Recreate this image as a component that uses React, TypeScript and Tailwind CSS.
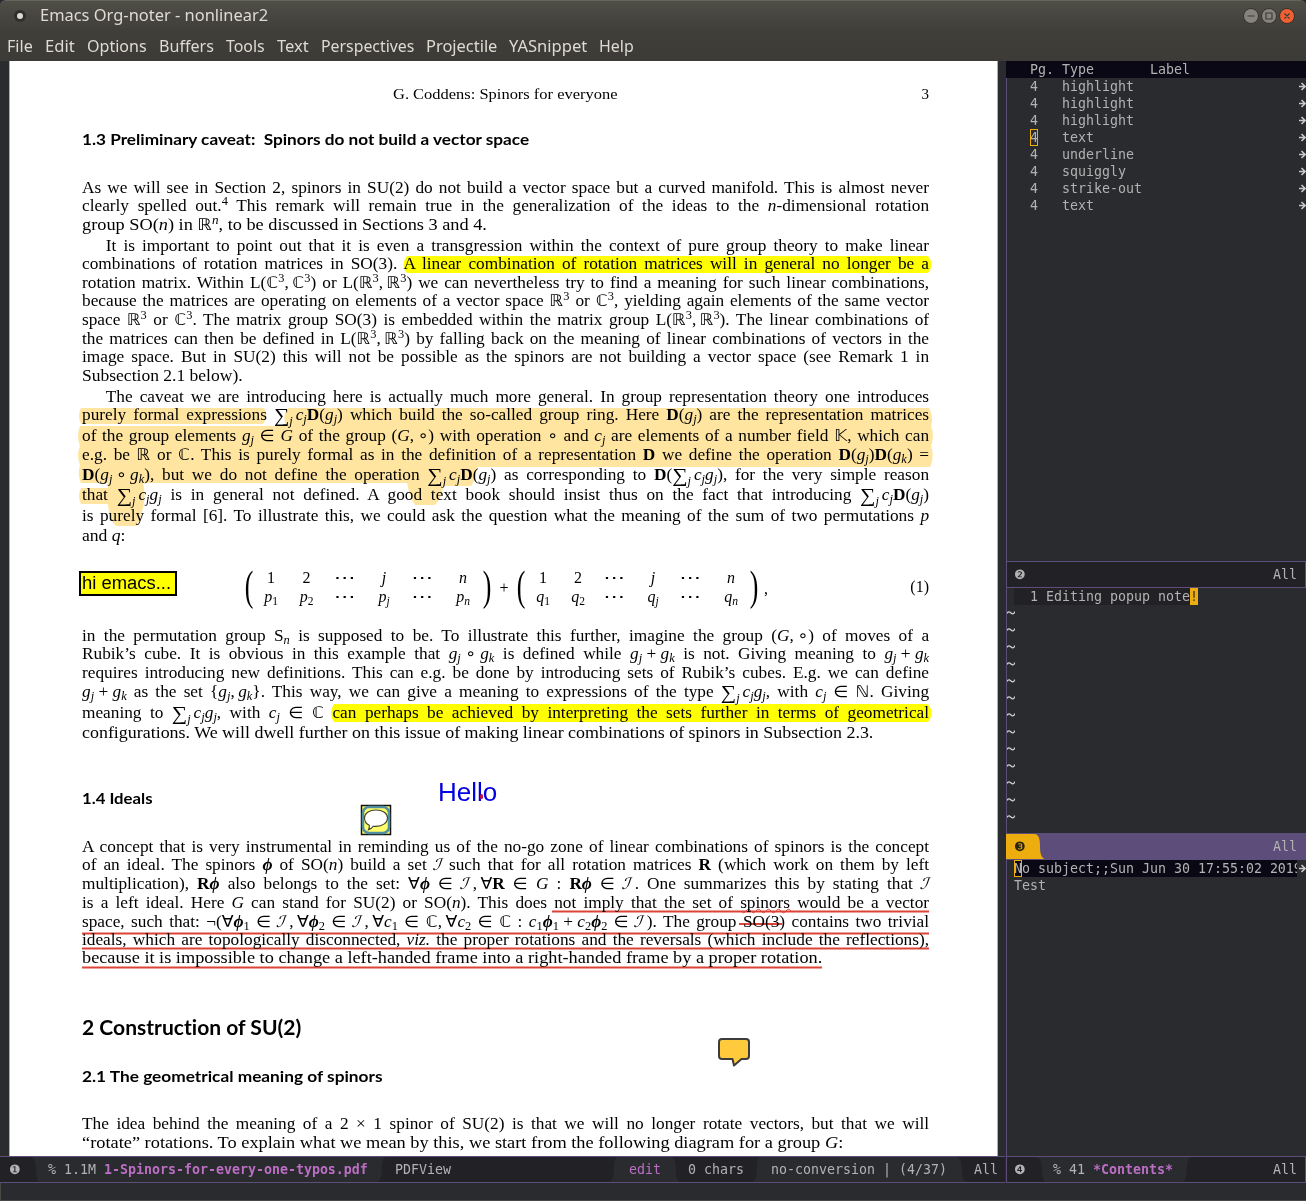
import { useLayoutEffect, useRef, useState } from "react";
import type { ReactNode } from "react";

/* Stretches a run of text horizontally so that it fills its box. */
function Fit({ className, children }: { className: string; children: ReactNode }) {
  const outer = useRef<HTMLSpanElement>(null);
  const inner = useRef<HTMLSpanElement>(null);
  const [scale, setScale] = useState(1);
  useLayoutEffect(() => {
    if (outer.current && inner.current && inner.current.offsetWidth > 0) {
      setScale(outer.current.clientWidth / inner.current.offsetWidth);
    }
  }, []);
  return (
    <span ref={outer} className={`block whitespace-nowrap ${className}`}>
      <span ref={inner} className="inline-block origin-left" style={{ transform: `scaleX(${scale})` }}>
        {children}
      </span>
    </span>
  );
}

/* Inline markup: {i:x} italic, {_:j} italic subscript, {,:1} subscript, {^:3} superscript,
   {m:n} italic superscript, {b:D} bold, {p:φ} bold italic, {d:ℝ} blackboard, {c:ℐ} script, {s:j} sum. */
function rich(source: string): ReactNode[] {
  const text = source
    .replace(/ \+ /g, "\u2005+\u2005")
    .replace(/\} ∘ \{/g, "}\u2005∘\u2005{");
  const out: ReactNode[] = [];
  const re = /\{([i_,^mbpdcs]):([^{}]*)\}/g;
  let last = 0;
  let m: RegExpExecArray | null;
  while ((m = re.exec(text))) {
    if (m.index > last) out.push(text.slice(last, m.index));
    const k = m.index;
    const t = m[2];
    if (m[1] === "i") out.push(<i key={k}>{t}</i>);
    if (m[1] === "_") out.push(<sub key={k} className="text-[11.5px] italic">{t}</sub>);
    if (m[1] === ",") out.push(<sub key={k} className="text-[11.5px]">{t}</sub>);
    if (m[1] === "^") out.push(<sup key={k} className="text-[11.5px]">{t}</sup>);
    if (m[1] === "m") out.push(<sup key={k} className="text-[11.5px] italic">{t}</sup>);
    if (m[1] === "b") out.push(<b key={k}>{t}</b>);
    if (m[1] === "p") out.push(<b key={k} className="italic">{t}</b>);
    if (m[1] === "d") out.push(<span key={k} className="font-['DejaVu_Sans'] text-[16px] leading-[0]">{t}</span>);
    if (m[1] === "c") out.push(<span key={k} className="inline-block h-0 -skew-x-[18deg] font-['DejaVu_Sans'] text-[16px] leading-[0]">{t}</span>);
    if (m[1] === "s")
      out.push(
        <span key={k}>
          <span className="relative top-[2px] text-[20px] leading-[0]">∑</span>
          <sub className="-bottom-[5px] text-[11.5px] italic">{t}</sub>{"\u2006"}
        </span>,
      );
    last = m.index + m[0].length;
  }
  out.push(text.slice(last));
  return out;
}

const heights: Record<number, string> = { 18: "h-[18px]", 19: "h-[19px]", 20: "h-[20px]", 21: "h-[21px]" };

type Row = [height: number, text: string, fit?: string, indent?: boolean];

function Lines({ rows }: { rows: Row[] }) {
  return (
    <div className="text-[16px] leading-[18px]">
      {rows.map(([h, text, fit, indent], n) => (
        <div key={n} className={heights[h]}>
          {fit ? (
            <Fit className={fit}>{rich(text)}</Fit>
          ) : (
            <div
              className={`w-[784.3px] origin-left scale-x-[1.08] whitespace-nowrap [text-align-last:justify] ${indent ? "indent-[22px]" : ""}`}
            >
              {rich(text)}
            </div>
          )}
        </div>
      ))}
    </div>
  );
}

const body1: Row[] = [
  [18, "As we will see in Section 2, spinors in SU(2) do not build a vector space but a curved manifold. This is almost never"],
  [19, "clearly spelled out.{^:4} This remark will remain true in the generalization of the ideas to the {i:n}-dimensional rotation"],
  [21, "group SO({i:n}) in {d:ℝ}{m:n}, to be discussed in Sections 3 and 4.", "w-[405px]"],
  [18, "It is important to point out that it is even a transgression within the context of pure group theory to make linear", undefined, true],
  [19, "combinations of rotation matrices in SO(3). A linear combination of rotation matrices will in general no longer be a"],
  [18, "rotation matrix. Within L({d:ℂ}{^:3},\u2009{d:ℂ}{^:3}) or L({d:ℝ}{^:3},\u2009{d:ℝ}{^:3}) we can nevertheless try to find a meaning for such linear combinations,"],
  [19, "because the matrices are operating on elements of a vector space {d:ℝ}{^:3} or {d:ℂ}{^:3}, yielding again elements of the same vector"],
  [19, "space {d:ℝ}{^:3} or {d:ℂ}{^:3}. The matrix group SO(3) is embedded within the matrix group L({d:ℝ}{^:3},\u2009{d:ℝ}{^:3}). The linear combinations of"],
  [18, "the matrices can then be defined in L({d:ℝ}{^:3},\u2009{d:ℝ}{^:3}) by falling back on the meaning of linear combinations of vectors in the"],
  [19, "image space. But in SU(2) this will not be possible as the spinors are not building a vector space (see Remark 1 in"],
  [21, "Subsection 2.1 below).", "w-[161px]"],
  [18, "The caveat we are introducing here is actually much more general. In group representation theory one introduces", undefined, true],
  [21, "purely formal expressions {s:j}{i:c}{_:j}{b:D}({i:g}{_:j}) which build the so-called group ring. Here {b:D}({i:g}{_:j}) are the representation matrices"],
  [19, "of the group elements {i:g}{_:j} ∈ {i:G} of the group ({i:G},\u2009∘) with operation ∘ and {i:c}{_:j} are elements of a number field {d:𝕂}, which can"],
  [20, "e.g. be {d:ℝ} or {d:ℂ}. This is purely formal as in the definition of a representation {b:D} we define the operation {b:D}({i:g}{_:j}){b:D}({i:g}{_:k}) ="],
  [20, "{b:D}({i:g}{_:j}\u2009∘\u2009{i:g}{_:k}), but we do not define the operation {s:j}{i:c}{_:j}{b:D}({i:g}{_:j}) as corresponding to {b:D}({s:j}{i:c}{_:j}{i:g}{_:j}), for the very simple reason"],
  [21, "that {s:j}{i:c}{_:j}{i:g}{_:j} is in general not defined. A good text book should insist thus on the fact that introducing {s:j}{i:c}{_:j}{b:D}({i:g}{_:j})"],
  [20, "is purely formal [6]. To illustrate this, we could ask the question what the meaning of the sum of two permutations {i:p}"],
  [19, "and {i:q}:", "w-[44px]"],
];

const body2: Row[] = [
  [18, "in the permutation group S{_:n} is supposed to be. To illustrate this further, imagine the group ({i:G},\u2009∘) of moves of a"],
  [19, "Rubik’s cube. It is obvious in this example that {i:g}{_:j} ∘ {i:g}{_:k} is defined while {i:g}{_:j} + {i:g}{_:k} is not. Giving meaning to {i:g}{_:j} + {i:g}{_:k}"],
  [19, "requires introducing new definitions. This can e.g. be done by introducing sets of Rubik’s cubes. E.g. we can define"],
  [21, "{i:g}{_:j} + {i:g}{_:k} as the set {{i:g}{_:j},\u2009{i:g}{_:k}}. This way, we can give a meaning to expressions of the type {s:j}{i:c}{_:j}{i:g}{_:j}, with {i:c}{_:j} ∈ {d:ℕ}. Giving"],
  [20, "meaning to {s:j}{i:c}{_:j}{i:g}{_:j}, with {i:c}{_:j} ∈ {d:ℂ} can perhaps be achieved by interpreting the sets further in terms of geometrical"],
  [19, "configurations. We will dwell further on this issue of making linear combinations of spinors in Subsection 2.3.", "w-[791px]"],
];

const body3: Row[] = [
  [18, "A concept that is very instrumental in reminding us of the no-go zone of linear combinations of spinors is the concept"],
  [19, "of an ideal. The spinors {p:ϕ} of SO({i:n}) build a set {c:ℐ} such that for all rotation matrices {b:R} (which work on them by left"],
  [19, "multiplication), {b:R}{p:ϕ} also belongs to the set: ∀{p:ϕ} ∈ {c:ℐ}\u2009,\u2009∀{b:R} ∈ {i:G} : {b:R}{p:ϕ} ∈ {c:ℐ}\u2009. One summarizes this by stating that {c:ℐ}"],
  [19, "is a left ideal. Here {i:G} can stand for SU(2) or SO({i:n}). This does not imply that the set of spinors would be a vector"],
  [18, "space, such that: ¬(∀{p:ϕ}{,:1} ∈ {c:ℐ}\u2009,\u2009∀{p:ϕ}{,:2} ∈ {c:ℐ}\u2009,\u2009∀{i:c}{,:1} ∈ {d:ℂ},\u2009∀{i:c}{,:2} ∈ {d:ℂ} : {i:c}{,:1}{p:ϕ}{,:1} + {i:c}{,:2}{p:ϕ}{,:2} ∈ {c:ℐ}\u2009). The group SO(3) contains two trivial"],
  [18, "ideals, which are topologically disconnected, {i:viz.} the proper rotations and the reversals (which include the reflections),"],
  [19, "because it is impossible to change a left-handed frame into a right-handed frame by a proper rotation.", "w-[740px]"],
];

const body4: Row[] = [
  [19, "The idea behind the meaning of a 2 × 1 spinor of SU(2) is that we will no longer rotate vectors, but that we will"],
  [19, "“rotate” rotations. To explain what we mean by this, we start from the following diagram for a group {i:G}:", "w-[761px]"],
];

function Delim({ children }: { children: string }) {
  return (
    <span className="flex h-[40px] w-[10px] items-center justify-center">
      <span className="relative -top-[2px] scale-x-[0.6] text-[43px] leading-[40px]">{children}</span>
    </span>
  );
}

function Matrix({ v, grid }: { v: string; grid: string }) {
  const cells = ["1", "2", "⋯", "{i:j}", "⋯", "{i:n}", `{i:${v}}{,:1}`, `{i:${v}}{,:2}`, "⋯", `{i:${v}}{_:j}`, "⋯", `{i:${v}}{_:n}`];
  return (
    <div className="flex">
      <Delim>(</Delim>
      <div className={`grid grid-rows-[19px_19px] text-center text-[16px] leading-[19px] ${grid}`}>
        {cells.map((c, n) => (
          <span key={n} className={c === "⋯" ? "scale-x-[1.35]" : ""}>{rich(c)}</span>
        ))}
      </div>
      <Delim>)</Delim>
    </div>
  );
}

function Annotations() {
  return (
    <svg className="pointer-events-none absolute -left-px top-0 h-[1095px] w-[988px] mix-blend-multiply" viewBox="9 61 988 1095" fill="none">
      <g fill="#ffff00">
        <path d="M407 256H928Q935 264.500 928 273H407Q400 264.500 407 256Z" />
        <path d="M334 704H928Q935 713 928 722H334Q328 713 334 704Z" />
      </g>
      <path
        fill="#ffe5a0"
        d="M81 408H264Q269 416 263 424H81Q77 416 81 408Z
           M288 408H929Q934 417 931 426Q935 436 931 446Q935 457 930 467H477Q476 480 471 486H443Q442 498 435 505H415Q410 498 407 483H143Q148 501 137 526H116Q109 520 108 504H81Q77 496 81 488H108V483H81Q77 475 80 465Q76 455 80 446Q76 436 80 426H287Q281 418 288 408Z"
      />
      <g stroke="#db4437" strokeWidth="2.200">
        <path d="M552 911.500H929M82 933.500H929M82 948.500H929M82 967.500H822" />
        <path d="M739 924H782" strokeWidth="2" />
        <path d="M741 911q2.500 3.500 5 0t5 0t5 0t5 0t5 0t5 0t5 0t5 0t5 0t5 0" strokeWidth="1" />
      </g>
    </svg>
  );
}

function CommentIcon() {
  return (
    <svg className="absolute left-[350px] top-[743px] h-[32px] w-[32px]" viewBox="0 0 32 32">
      <rect x="1.500" y="1.500" width="29" height="29" fill="#ffff6a" stroke="#111" strokeWidth="1.500" />
      <rect x="3" y="3" width="26" height="26" rx="6" fill="none" stroke="#4f8fa0" strokeWidth="2.500" />
      <path
        d="M16 6c6.900 0 11.500 3.400 11.500 8s-4.600 8.400-11.500 8.400c-1 0-2 0-2.800-.2-1 1.600-2.900 2.800-4.700 3.600.6-1.400 1-3 .8-4.500C6.200 19.800 4.500 17.300 4.500 14c0-4.600 4.600-8 11.500-8z"
        fill="#fff"
        stroke="#44442a"
        strokeWidth="1.100"
      />
    </svg>
  );
}

function NoteIcon() {
  return (
    <svg className="absolute left-[707px] top-[976px] h-[31px] w-[34px]" viewBox="0 0 34 31">
      <path
        d="M5 2H29Q32 2 32 5V19Q32 22 29 22H24.500L17 28.500L15.500 22H5Q2 22 2 19V5Q2 2 5 2Z"
        fill="#ffcb3d"
        stroke="#3c3c3c"
        strokeWidth="2"
        strokeLinejoin="round"
      />
    </svg>
  );
}

function PdfPage() {
  return (
    <div className="relative h-[1095px] w-[989px] shrink-0 overflow-hidden border-x border-[#d8b040] bg-white pl-[72px] font-['Liberation_Serif','DejaVu_Sans',serif] text-black">
      <div className="flex h-[67px] w-[847px] items-start justify-between pt-[24px] text-[15px] leading-[18px]">
        <Fit className="ml-[311px] w-[225px]">G. Coddens: Spinors for everyone</Fit>
        <span>3</span>
      </div>
      <h2 className="h-[51px] font-['Lato',sans-serif] text-[16px] font-bold leading-[22px] [font-variant-ligatures:none]">
        <Fit className="w-[447px]">1.3 Preliminary caveat:&nbsp; Spinors do not build a vector space</Fit>
      </h2>
      <Lines rows={body1} />
      <div className="flex h-[81px] w-[847px] items-start pt-[22px]">
        <div className="ml-[162px] flex items-center text-[16px]">
          <Matrix v="p" grid="w-[228px] grid-cols-[34px_37px_39px_40px_36px_46px]" />
          <span className="relative -top-px w-[24px] text-center">+</span>
          <Matrix v="q" grid="w-[223px] grid-cols-[34px_36px_36px_42px_32px_50px]" />
          <span className="ml-[5px]">,</span>
        </div>
        <span className="ml-auto text-[16px] leading-[38px]">(1)</span>
      </div>
      <Lines rows={body2} />
      <h2 className="h-[95px] pt-[44px] font-['Lato',sans-serif] text-[16px] font-bold leading-[22px] [font-variant-ligatures:none]">
        <Fit className="w-[71px]">1.4 Ideals</Fit>
      </h2>
      <Lines rows={body3} />
      <h1 className="h-[97px] pt-[46px] font-['Lato',sans-serif] text-[20px] font-bold leading-[26px] [font-variant-ligatures:none]">
        <Fit className="w-[219px]">2 Construction of SU(2)</Fit>
      </h1>
      <h2 className="h-[50px] font-['Lato',sans-serif] text-[16px] font-bold leading-[22px] [font-variant-ligatures:none]">
        <Fit className="w-[300px]">2.1 The geometrical meaning of spinors</Fit>
      </h2>
      <Lines rows={body4} />

      <Annotations />
      <div className="absolute left-[69px] top-[510px] flex h-[25px] w-[98px] items-center border-2 border-black bg-[#ffff00] pl-px font-['Liberation_Sans',sans-serif] text-[18px]">
        <Fit className="w-[89px]">hi emacs...</Fit>
      </div>
      <div className="absolute left-[428px] top-[716px] font-['Liberation_Sans',sans-serif] text-[26px] leading-[30px] text-[#0000e0]">
        <Fit className="w-[59px]">Hello</Fit>
        <span className="absolute left-[42px] top-[17px] h-[5px] w-[3px] rounded-full bg-[#c01050]" />
      </div>
      <CommentIcon />
      <NoteIcon />
    </div>
  );
}

/* Curved boundary between two mode-line segments. */
function Wave({ left, right, flip }: { left: string; right: string; flip?: boolean }) {
  return (
    <svg className={`h-full w-[9px] shrink-0 ${right}`} viewBox="0 0 9 26" preserveAspectRatio="none">
      <path
        className={left}
        d={flip ? "M0 0H9C5.500 1 5.500 4 5 10C4.500 20 4 25 0 26Z" : "M0 0C4 1 4.500 6 5 13C5 20 6 25 9 26H0Z"}
      />
    </svg>
  );
}

const DARK = "fill-[#222226]";
const LIGHT = "fill-[#292b2e]";
const BG_DARK = "bg-[#222226]";
const BG_LIGHT = "bg-[#292b2e]";

function LeftModeline() {
  return (
    <div className="flex h-[27px] w-[1005px] items-center border-y border-[#5d4d7a] bg-[#222226] leading-[25px]">
      <span className="w-[31px] pl-[9px]">❶</span>
      <Wave left={DARK} right={BG_LIGHT} />
      <span className="w-[337px] whitespace-pre bg-[#292b2e] pl-[8px]">
        % 1.1M <b className="text-[#bc6ec5]">1-Spinors-for-every-one-typos.pdf</b>
      </span>
      <Wave left={LIGHT} right={BG_DARK} flip />
      <span className="w-[223px] pl-[9px]">PDFView</span>
      <Wave left={DARK} right={BG_LIGHT} flip />
      <span className="w-[53px] bg-[#292b2e] pl-[11px] text-[#bc6ec5]">edit</span>
      <Wave left={LIGHT} right={BG_DARK} />
      <span className="w-[72px] whitespace-nowrap pl-[8px]">0 chars</span>
      <Wave left={DARK} right={BG_LIGHT} flip />
      <span className="w-[196px] whitespace-nowrap bg-[#292b2e] pl-[10px]">no-conversion | (4/37)</span>
      <Wave left={LIGHT} right={BG_DARK} />
      <span className="ml-auto mr-[7px]">All</span>
    </div>
  );
}

const annots = ["highlight", "highlight", "highlight", "text", "underline", "squiggly", "strike-out", "text"];

function Arrow() {
  return (
    <svg className="h-[9px] w-[7px] shrink-0" viewBox="0 0 7 9" fill="none" stroke="#c8c8c8" strokeWidth="1.600">
      <path d="M0 4.500H6M2.500 1L6 4.500L2.500 8" />
    </svg>
  );
}

function RightColumn() {
  return (
    <div className="flex w-[300px] flex-col">
      <div className="flex h-[17px] whitespace-pre bg-[#0a0814] pl-[24px]">
        {"Pg. Type       Label"}
      </div>
      <div className="h-[483px] border-l border-[#5d4d7a]">
        {annots.map((a, n) => (
          <div key={n} className="flex h-[17px] items-center pl-[23px]">
            <span className={`w-[8px] ${n === 3 ? "outline outline-1 -outline-offset-1 outline-[#eead0e]" : ""}`}>4</span>
            <span className="ml-[24px] flex-1">{a}</span>
            <Arrow />
          </div>
        ))}
      </div>
      <div className="flex h-[27px] items-center justify-between border border-[#5d4d7a] bg-[#222226] pl-[7px] pr-[8px]">
        <span>❷</span>
        <span>All</span>
      </div>
      <div className="h-[245px] border-l border-[#5d4d7a]">
        <div className="ml-[7px] flex h-[17px] whitespace-pre">
          <span className="bg-[#222226]">{"  1 Editing popup note"}</span>
          <span className="bg-[#eead0e] text-[#3a3020]">!</span>
        </div>
        {Array.from({ length: 13 }, (_, n) => (
          <div key={n} className="flex h-[17px] items-center pb-px text-[#d0d0d0]">
            <svg className="h-[4px] w-[8px]" viewBox="0 0 8 4" fill="none" stroke="currentColor" strokeWidth="1.300">
              <path d="M0.500 2.500V1.500Q2 0 4 2T7.500 1.500V0.500" />
            </svg>
          </div>
        ))}
      </div>
      <div className="flex h-[27px] items-center bg-[#5d4d7a] pr-[9px]">
        <span className="flex h-[25px] w-[29px] items-center bg-[#eead0e] pl-[8px] text-[#2b2410]">❸</span>
        <svg className="h-[25px] w-[10px]" viewBox="0 0 10 25">
          <path fill="#eead0e" d="M0 0C4 1 5 5 5 12C5 19 6 24 10 25H0Z" />
        </svg>
        <span className="ml-auto">All</span>
      </div>
      <div className="h-[296px] border-l border-[#5d4d7a]">
        <div className="flex h-[17px] items-center pl-[7px]">
          <div className="flex w-[283px] overflow-hidden whitespace-nowrap bg-[#0a0814]">
            <span className="outline outline-1 -outline-offset-1 outline-[#eead0e]">N</span>
            <span>o subject;;Sun Jun 30 17:55:02 2019</span>
          </div>
          <span className="ml-[2px] flex items-center"><Arrow /></span>
        </div>
        <div className="h-[17px] pl-[7px]">Test</div>
      </div>
      <div className="flex h-[27px] items-center border border-[#5d4d7a] bg-[#222226] leading-[25px]">
        <span className="w-[30px] pl-[7px]">❹</span>
        <Wave left={DARK} right={BG_LIGHT} />
        <span className="w-[136px] whitespace-pre bg-[#292b2e] pl-[7px]">
          % 41 <b className="text-[#bc6ec5]">*Contents*</b>
        </span>
        <Wave left={LIGHT} right={BG_DARK} flip />
        <span className="ml-auto mr-[8px]">All</span>
      </div>
    </div>
  );
}

const menu: [string, string][] = [
  ["File", "w-[26px]"],
  ["Edit", "w-[30px]"],
  ["Options", "w-[60px]"],
  ["Buffers", "w-[55px]"],
  ["Tools", "w-[39px]"],
  ["Text", "w-[32px]"],
  ["Perspectives", "w-[93px]"],
  ["Projectile", "w-[71px]"],
  ["YASnippet", "w-[78px]"],
  ["Help", "w-[35px]"],
];

function WindowButtons() {
  return (
    <svg className="mr-[10px] h-[18px] w-[54px]" viewBox="0 0 54 18" fill="none">
      <circle cx="9" cy="9" r="7.500" fill="#85837b" stroke="#33322e" />
      <circle cx="27" cy="9" r="7.500" fill="#85837b" stroke="#33322e" />
      <circle cx="45" cy="9" r="7.500" fill="#ee5f31" stroke="#33322e" />
      <path d="M5.500 9H12.500M24 6H30V12H24ZM42.500 6.500L47.500 11.500M47.500 6.500L42.500 11.500" stroke="#3c3b37" strokeWidth="1.200" />
    </svg>
  );
}

export default function App() {
  return (
    <div className="h-[1201px] w-[1306px] overflow-hidden bg-[#292b2e] font-['DejaVu_Sans_Mono',monospace] text-[13.29px] leading-[17px] text-[#b2b2b2]">
      <header className="h-[61px] rounded-t-[6px] border-t border-[#66645c] bg-linear-to-b from-[#4f4e47] via-[#3f3e39] via-50% to-[#3c3b37] font-['Noto_Sans',sans-serif] text-[#dfdbd2]">
        <div className="flex h-[30px] items-center">
          <span className="ml-[14px] flex h-[12px] w-[12px] items-center justify-center rounded-full bg-[#302f2b]">
            <span className="h-[6px] w-[6px] rounded-full bg-[#dfdbd2]" />
          </span>
          <Fit className="relative -top-px ml-[14px] w-[228px] text-[15.5px] leading-[20px]">Emacs Org-noter - nonlinear2</Fit>
          <span className="ml-auto"><WindowButtons /></span>
        </div>
        <nav className="flex h-[30px] items-center gap-[12px] pl-[7px] text-[15.5px] leading-[20px]">
          {menu.map(([label, w]) => (
            <Fit key={label} className={w}>{label}</Fit>
          ))}
        </nav>
      </header>
      <main className="flex">
        <div className="flex w-[1006px] flex-col border-r border-[#292b2e]">
          <div className="h-[1095px] pl-[9px]">
            <PdfPage />
          </div>
          <LeftModeline />
        </div>
        <RightColumn />
      </main>
      <footer className="h-[18px] border-b border-l border-[#4a4945]" />
    </div>
  );
}
